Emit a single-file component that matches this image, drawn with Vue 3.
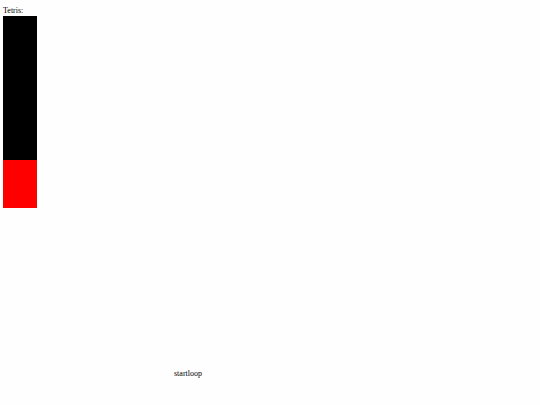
<script setup>
import { ref } from 'vue'

const CELL_W = 17
const CELL_H = 24

// the board is ten by fifteen cells, the well fills its top left corner
const board = { cols: 10, rows: 15 }
const well = { cols: 2, rows: 8 }
const block = ref({ x: 0, y: 6, size: 2 })
let timer = null

const step = () => {
	const bottom = well.rows - block.value.size
	block.value.y = block.value.y < bottom ? block.value.y + 1 : 0
}

const startLoop = () => {
	if (timer === null) timer = setInterval(step, 500)
}
</script>

<template>
	<main class="tetris">
		<div class="title">Tetris:</div>
		<div class="game">
			<svg :width="board.cols * CELL_W" :height="board.rows * CELL_H">
				<rect class="well" :width="well.cols * CELL_W" :height="well.rows * CELL_H" />
				<rect
					class="block"
					:x="block.x * CELL_W"
					:y="block.y * CELL_H"
					:width="block.size * CELL_W"
					:height="block.size * CELL_H"
				/>
			</svg>
			<button class="start" type="button" @click="startLoop">startloop</button>
		</div>
	</main>
</template>

<style>
body {
	background: #fefefe;
}
</style>

<style scoped>
.tetris {
	padding: 5px 3px;
	font-family: "Liberation Serif", "Times New Roman", serif;
	font-size: 8px;
	line-height: 11px;
	color: #000;
}
.game {
	display: flex;
	align-items: baseline;
	gap: 1px;
}
.well {
	fill: #000;
}
.block {
	fill: #f00;
}
.start {
	padding: 0;
	border: none;
	background: none;
	font: inherit;
	color: inherit;
	cursor: pointer;
}
</style>
